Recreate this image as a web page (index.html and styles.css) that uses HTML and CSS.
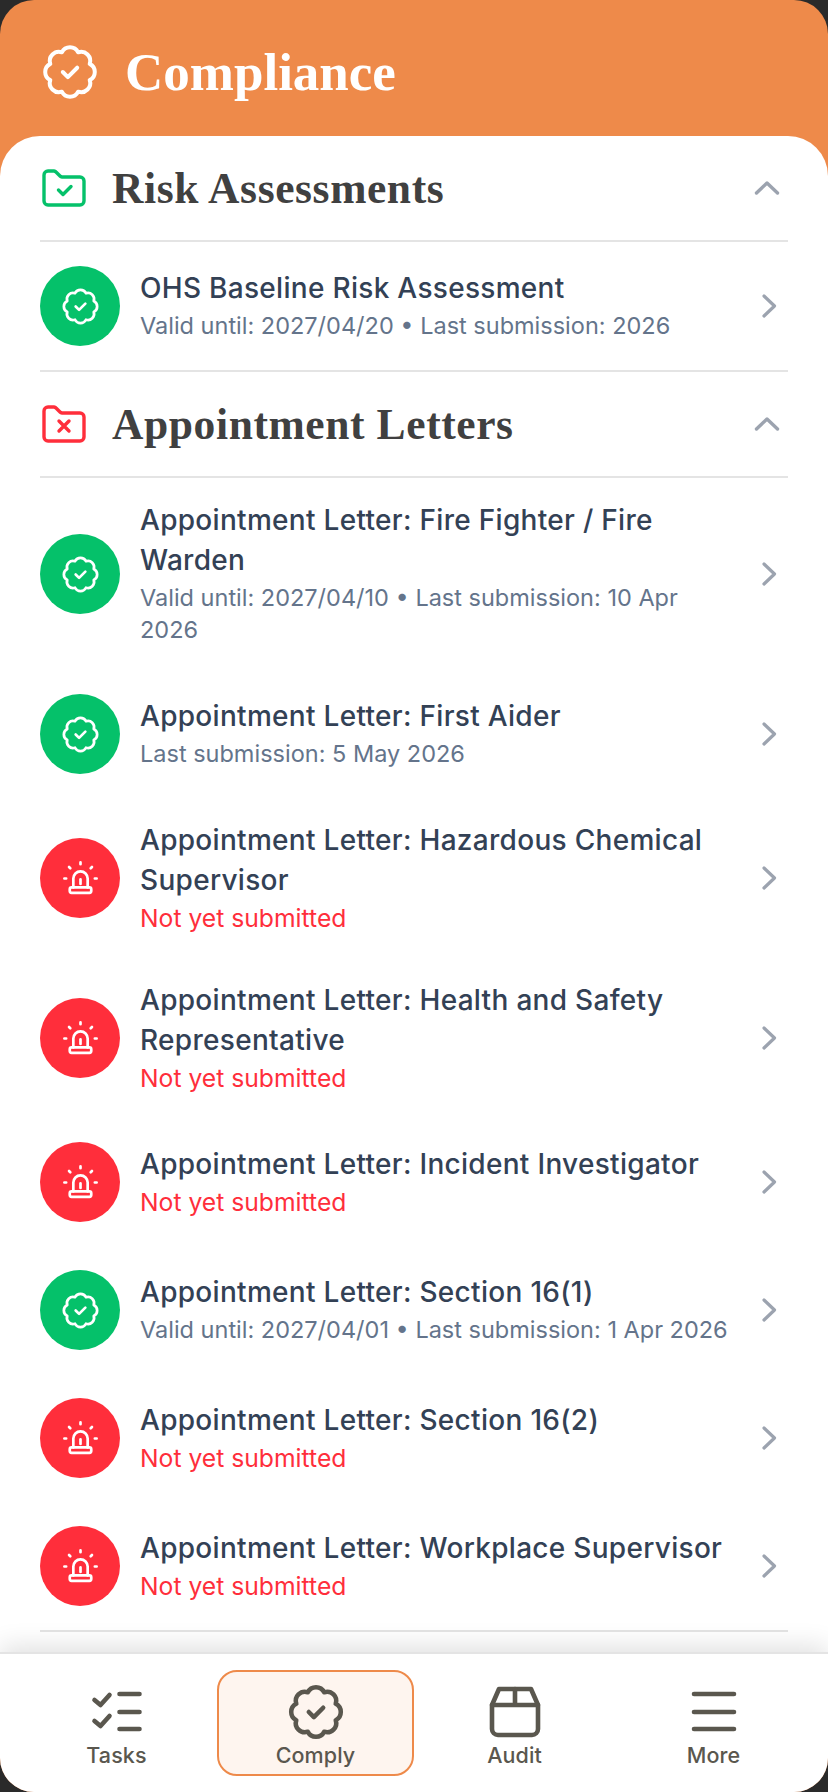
FILE: index.html
```html
<!DOCTYPE html>
<html lang="en">
<head>
    <meta charset="UTF-8">
    <meta name="viewport" content="width=device-width, initial-scale=1.0">
    <title>Compliance</title>
    <link rel="stylesheet" href="styles.css">
</head>
<body>
    <svg class="sprite" aria-hidden="true">
        <symbol id="rosette" viewBox="0 0 24 24">
            <path d="M8.94 4.61A3.41 3.41 0 0 1 15.06 4.61A3.41 3.41 0 0 1 19.39 8.94A3.41 3.41 0 0 1 19.39 15.06A3.41 3.41 0 0 1 15.06 19.39A3.41 3.41 0 0 1 8.94 19.39A3.41 3.41 0 0 1 4.61 15.06A3.41 3.41 0 0 1 4.61 8.94A3.41 3.41 0 0 1 8.94 4.61z"/>
            <path d="M9.3 12l1.9 1.900l3.500 -3.500"/>
        </symbol>
        <symbol id="siren" viewBox="0 0 24 24">
            <path d="M8 17v-5a4 4 0 0 1 8 0v5"/>
            <path d="M12 12.500v2.500"/>
            <path d="M3 12h1m8 -9v1m8 8h1m-15.4 -6.4l.7 .7m12.1 -.7l-.7 .7"/>
            <path d="M6 18a1 1 0 0 1 1 -1h10a1 1 0 0 1 1 1v1a1 1 0 0 1 -1 1h-10a1 1 0 0 1 -1 -1z"/>
        </symbol>
        <symbol id="chevron-right" viewBox="0 0 40 40">
            <path d="M16 10l10.500 10l-10.500 10"/>
        </symbol>
        <symbol id="chevron-up" viewBox="0 0 40 40">
            <path d="M8.500 25l10.500 -10l10.500 10"/>
        </symbol>
    </svg>

    <div class="screen">
        <header class="top">
            <svg class="top-icon"><use href="#rosette"/></svg>
            <h1>Compliance</h1>
        </header>

        <main class="card">
            <section class="group">
                <div class="group-head">
                    <svg class="folder folder-ok" viewBox="0 0 48 48">
                        <path d="M4 11a4 4 0 0 1 4 -4h6a3 3 0 0 1 2 1l4 4a3 3 0 0 0 2 1h18a4 4 0 0 1 4 4v20a4 4 0 0 1 -4 4h-32a4 4 0 0 1 -4 -4z"/>
                        <path d="M18.500 26l4.500 4.500l8 -8"/>
                    </svg>
                    <h2>Risk Assessments</h2>
                    <svg class="chev-up"><use href="#chevron-up"/></svg>
                </div>
                <div class="row">
                    <span class="badge ok"><svg><use href="#rosette"/></svg></span>
                    <div class="row-text">
                        <p class="name">OHS Baseline Risk Assessment</p>
                        <p class="sub">Valid until: 2027/04/20 • Last submission: 2026</p>
                    </div>
                    <svg class="chev"><use href="#chevron-right"/></svg>
                </div>
            </section>

            <section class="group">
                <div class="group-head">
                    <svg class="folder folder-bad" viewBox="0 0 48 48">
                        <path d="M4 11a4 4 0 0 1 4 -4h6a3 3 0 0 1 2 1l4 4a3 3 0 0 0 2 1h18a4 4 0 0 1 4 4v20a4 4 0 0 1 -4 4h-32a4 4 0 0 1 -4 -4z"/>
                        <path d="M19 21l10 10m0 -10l-10 10"/>
                    </svg>
                    <h2>Appointment Letters</h2>
                    <svg class="chev-up"><use href="#chevron-up"/></svg>
                </div>
                <div class="row">
                    <span class="badge ok"><svg><use href="#rosette"/></svg></span>
                    <div class="row-text">
                        <p class="name">Appointment Letter: Fire Fighter / Fire Warden</p>
                        <p class="sub">Valid until: 2027/04/10 • Last submission: 10 Apr 2026</p>
                    </div>
                    <svg class="chev"><use href="#chevron-right"/></svg>
                </div>
                <div class="row">
                    <span class="badge ok"><svg><use href="#rosette"/></svg></span>
                    <div class="row-text">
                        <p class="name">Appointment Letter: First Aider</p>
                        <p class="sub">Last submission: 5 May 2026</p>
                    </div>
                    <svg class="chev"><use href="#chevron-right"/></svg>
                </div>
                <div class="row">
                    <span class="badge bad"><svg><use href="#siren"/></svg></span>
                    <div class="row-text">
                        <p class="name">Appointment Letter: Hazardous Chemical Supervisor</p>
                        <p class="sub missing">Not yet submitted</p>
                    </div>
                    <svg class="chev"><use href="#chevron-right"/></svg>
                </div>
                <div class="row">
                    <span class="badge bad"><svg><use href="#siren"/></svg></span>
                    <div class="row-text">
                        <p class="name">Appointment Letter: Health and Safety Representative</p>
                        <p class="sub missing">Not yet submitted</p>
                    </div>
                    <svg class="chev"><use href="#chevron-right"/></svg>
                </div>
                <div class="row">
                    <span class="badge bad"><svg><use href="#siren"/></svg></span>
                    <div class="row-text">
                        <p class="name">Appointment Letter: Incident Investigator</p>
                        <p class="sub missing">Not yet submitted</p>
                    </div>
                    <svg class="chev"><use href="#chevron-right"/></svg>
                </div>
                <div class="row">
                    <span class="badge ok"><svg><use href="#rosette"/></svg></span>
                    <div class="row-text">
                        <p class="name">Appointment Letter: Section 16(1)</p>
                        <p class="sub">Valid until: 2027/04/01 • Last submission: 1 Apr 2026</p>
                    </div>
                    <svg class="chev"><use href="#chevron-right"/></svg>
                </div>
                <div class="row">
                    <span class="badge bad"><svg><use href="#siren"/></svg></span>
                    <div class="row-text">
                        <p class="name">Appointment Letter: Section 16(2)</p>
                        <p class="sub missing">Not yet submitted</p>
                    </div>
                    <svg class="chev"><use href="#chevron-right"/></svg>
                </div>
                <div class="row">
                    <span class="badge bad"><svg><use href="#siren"/></svg></span>
                    <div class="row-text">
                        <p class="name">Appointment Letter: Workplace Supervisor</p>
                        <p class="sub missing">Not yet submitted</p>
                    </div>
                    <svg class="chev"><use href="#chevron-right"/></svg>
                </div>
            </section>
        </main>

        <nav class="tabs">
            <a class="tab">
                <svg viewBox="0 0 64 64">
                    <path d="M9.500 20l6 5l9 -10M9.500 41l6 5l9 -10"/>
                    <path d="M34.500 14h20M34.500 32h20M34.500 49h20"/>
                </svg>
                <span>Tasks</span>
            </a>
            <a class="tab active">
                <svg class="rosette-tab"><use href="#rosette"/></svg>
                <span>Comply</span>
            </a>
            <a class="tab">
                <svg viewBox="0 0 64 64">
                    <path d="M9 25l7 -16h32l7 16v24a6 6 0 0 1 -6 6h-34a6 6 0 0 1 -6 -6z"/>
                    <path d="M9 25h46M32 9v16"/>
                </svg>
                <span>Audit</span>
            </a>
            <a class="tab">
                <svg viewBox="0 0 64 64">
                    <path d="M12 14h40M12 32h40M12 49h40"/>
                </svg>
                <span>More</span>
            </a>
        </nav>
    </div>
</body>
</html>
```

FILE: styles.css
```css
/* General Styles */
* {
    box-sizing: border-box;
}

html, body {
    margin: 0;
    height: 100%;
}

body {
    background-color: #2a2a2a;
    font-family: Inter, "Liberation Sans", sans-serif;
}

.sprite {
    display: none;
}

svg {
    fill: none;
    stroke-linecap: round;
    stroke-linejoin: round;
}

p, h1, h2 {
    margin: 0;
}

.screen {
    display: flex;
    flex-direction: column;
    height: 1792px;
    overflow: hidden;
    border-radius: 34px;
    background-color: #ee8a4a;
}

/* Header */
.top {
    display: flex;
    align-items: center;
    gap: 23px;
    height: 136px;
    padding: 8px 0 0 38px;
    flex-shrink: 0;
}

.top-icon {
    width: 64px;
    height: 64px;
    stroke: #fff;
    stroke-width: 1.5;
}

.top h1 {
    color: #fff;
    font-family: "Liberation Serif", serif;
    font-size: 53px;
    font-weight: 700;
}

/* Card with the lists */
.card {
    flex: 1;
    min-height: 0;
    padding: 0 40px;
    background-color: #fff;
    border-radius: 40px 40px 0 0;
}

.group {
    border-bottom: 2px solid #e4e4e4;
}

.group-head {
    display: flex;
    align-items: center;
    height: 106px;
    border-bottom: 2px solid #e4e4e4;
}

.group-head h2 {
    flex: 1;
    margin-left: 24px;
    color: #404040;
    font-family: "Liberation Serif", serif;
    font-size: 43.5px;
    font-weight: 700;
    letter-spacing: 0.6px;
}

.folder {
    width: 48px;
    height: 48px;
    stroke-width: 3.4;
}

.folder-ok {
    stroke: #05c16a;
}

.folder-bad {
    stroke: #ff2e3b;
}

.chev-up {
    width: 40px;
    height: 40px;
    stroke: #9ca3af;
    stroke-width: 3.4;
}

.row {
    display: flex;
    align-items: center;
    gap: 20px;
    padding: 24px 0;
}

.badge {
    display: flex;
    align-items: center;
    justify-content: center;
    width: 80px;
    height: 80px;
    flex-shrink: 0;
    border-radius: 50%;
}

.badge svg {
    width: 43px;
    height: 43px;
    stroke: #fff;
    stroke-width: 1.5;
}

.ok {
    background-color: #05c16a;
}

.bad {
    background-color: #ff2e3b;
}

.row-text {
    flex: 1;
    min-width: 0;
}

.name {
    margin: -2px 0 2px;
    color: #334155;
    font-size: 28px;
    font-weight: 500;
    letter-spacing: 0.3px;
    line-height: 40px;
}

.sub {
    color: #64748b;
    font-size: 23.5px;
    line-height: 32px;
}

.missing {
    color: #ff2e3b;
    font-size: 24.7px;
}

.chev {
    width: 40px;
    height: 40px;
    flex-shrink: 0;
    stroke: #9ca3af;
    stroke-width: 3.2;
}

/* Bottom navigation */
.tabs {
    display: flex;
    gap: 2px;
    height: 140px;
    padding: 16px 16px 0 18px;
    flex-shrink: 0;
    background-color: #fff;
    border-top: 2px solid #e4e4e4;
    box-shadow: 0 -6px 24px rgba(0, 0, 0, 0.12);
}

.tab {
    display: flex;
    flex: 1;
    flex-direction: column;
    align-items: center;
    height: 106px;
    padding-top: 8px;
    border: 2px solid transparent;
    border-radius: 20px;
    color: #5a574e;
    font-size: 21.5px;
    font-weight: 500;
    letter-spacing: 0.1px;
}

.tab svg {
    width: 64px;
    height: 64px;
    stroke: #5a574e;
    stroke-width: 4.6;
}

.tab .rosette-tab {
    stroke-width: 1.7;
}

.tab span {
    margin-top: -2px;
    line-height: 26px;
}

.tab.active {
    background-color: #fef5ef;
    border-color: #ee8a4a;
}
```
